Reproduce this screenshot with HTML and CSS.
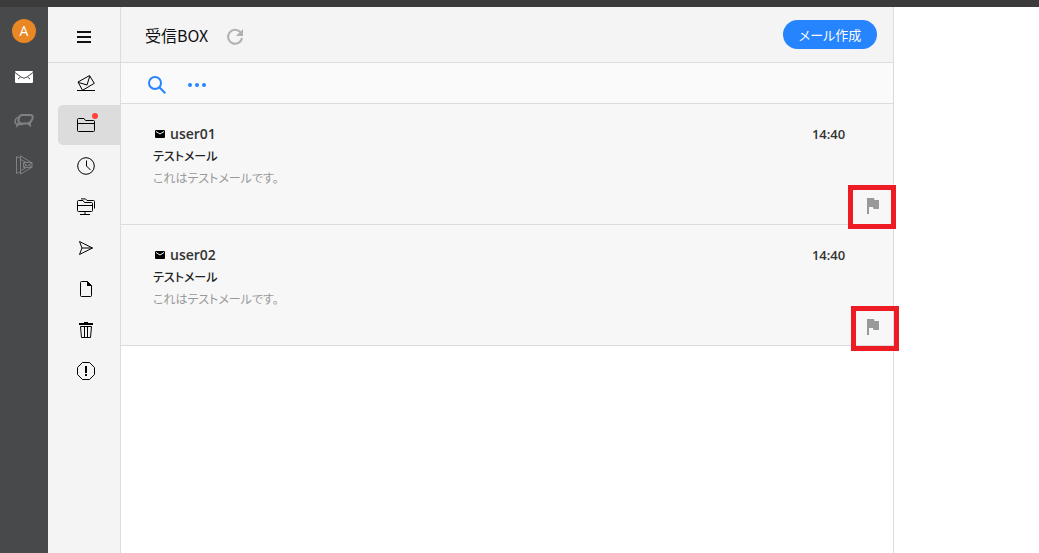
FILE: index.html
```html
<!DOCTYPE html>
<html lang="ja">
<head>
    <meta charset="UTF-8">
    <meta name="viewport" content="width=device-width, initial-scale=1.0">
    <title>受信BOX</title>
    <link rel="stylesheet" href="styles.css">
</head>
<body>
    <div class="topbar"></div>
    <div class="app">
        <nav class="rail" aria-label="アプリ">
            <button class="avatar">A</button>
            <a href="#" class="rail-link active" aria-label="メール">
                <svg width="18" height="12" viewBox="0 0 18 12">
                    <rect width="18" height="12" rx="1" fill="currentColor"/>
                    <path d="M0 1.500L6 6Q9 8.500 12 6L18 1.500M3 8L5.500 6M15 8L12.500 6" fill="none" stroke="#48494b"/>
                </svg>
            </a>
            <a href="#" class="rail-link" aria-label="チャット">
                <svg width="20" height="16" viewBox="0 0 20 16" fill="none" stroke="currentColor" stroke-width="2">
                    <path d="M7.500 2H16Q19.500 2 18.500 5.500Q17.500 9 14 10.500H7Q4 10 4.500 6.500Q5 3 7.500 2Z"/>
                    <path d="M4 4Q1 6 1 8.500Q1 11 4 11.500H9" stroke-width="1.500"/>
                    <path d="M2 10.500H6L2.500 15ZM13 10.500L17 8V14.500Z" fill="currentColor" stroke="none"/>
                </svg>
            </a>
            <a href="#" class="rail-link" aria-label="ビデオ">
                <svg width="18" height="20" viewBox="0 0 18 20" fill="none" stroke="currentColor">
                    <path d="M5 17L1.500 18.500V1.500L5 3"/>
                    <path d="M5.500 .8L17 8M5.500 .8V19.200L17 12M6 4.500L12 8M6 15.500L12 12"/>
                    <path d="M8.500 7.500H17V12.500H8.500ZM8.500 8L12.500 11L17 8M9 12L11 10M17 12L14 10"/>
                </svg>
            </a>
        </nav>

        <nav class="folders" aria-label="フォルダー">
            <div class="folders-head">
                <button class="icon-btn" aria-label="メニュー">
                    <svg width="14" height="12" viewBox="0 0 14 12" fill="currentColor">
                        <path d="M0 0H14V2H0ZM0 5H14V7H0ZM0 10H14V12H0Z"/>
                    </svg>
                </button>
            </div>
            <ul class="folder-list">
                <li><a href="#" class="folder" aria-label="全メール">
                    <svg width="18" height="18" viewBox="0 0 18 18">
                        <path d="M1 7L12.500 .6L17.300 8.300L5.500 15.300ZM1 7.300L10 10L12.800 1"/>
                        <path d="M0 15.500H18"/>
                    </svg>
                </a></li>
                <li><a href="#" class="folder selected" aria-label="受信BOX">
                    <svg width="18" height="18" viewBox="0 0 18 18">
                        <path d="M.5 14.500V3.500Q.5 2.500 1.500 2.500H7L8.500 4.500H16.500Q17.500 4.500 17.500 5.500V14.500Q17.500 15.500 16.500 15.500H1.500Q.5 15.500 .5 14.500ZM.5 7.500H17.500"/>
                    </svg>
                    <span class="dot"></span>
                </a></li>
                <li><a href="#" class="folder" aria-label="履歴">
                    <svg width="18" height="18" viewBox="0 0 18 18">
                        <circle cx="9" cy="9" r="8.300"/>
                        <path d="M9.500 3.500V9L13.500 13"/>
                    </svg>
                </a></li>
                <li><a href="#" class="folder" aria-label="共有フォルダー">
                    <svg width="18" height="18" viewBox="0 0 18 18">
                        <path d="M.5 12.500V3.500Q.5 2.500 1.500 2.500H6L7.500 4.500H14.500Q15.500 4.500 15.500 5.500V12.500Q15.500 13.500 14.500 13.500H1.500Q.5 13.500 .5 12.500ZM.5 7.500H15.500"/>
                        <path d="M4 .9H8.500L10 2.500H16.500Q17.500 2.500 17.500 3.500V10.500M8 13.500V16.500M3 16.500H13"/>
                    </svg>
                </a></li>
                <li><a href="#" class="folder" aria-label="送信済み">
                    <svg width="18" height="18" viewBox="0 0 18 18">
                        <path d="M2.500 2.500L15.500 9L2.500 15.500L5 9ZM5 9H15.500"/>
                    </svg>
                </a></li>
                <li><a href="#" class="folder" aria-label="下書き">
                    <svg width="18" height="18" viewBox="0 0 18 18">
                        <path d="M3.500 2.500Q3.500 1.500 4.500 1.500H10.500L14.500 5.500V15.500Q14.500 16.500 13.500 16.500H4.500Q3.500 16.500 3.500 15.500Z"/>
                        <path class="solid" d="M10 1L15 6H10Z"/>
                    </svg>
                </a></li>
                <li><a href="#" class="folder" aria-label="ゴミ箱">
                    <svg width="18" height="18" viewBox="0 0 18 18">
                        <path class="solid" d="M2 2H7V1H11V2H16V4H2Z"/>
                        <path d="M3.500 5.500H14.500L13.500 16.500H4.500ZM7.500 6V16M10.500 6V16"/>
                    </svg>
                </a></li>
                <li><a href="#" class="folder" aria-label="迷惑メール">
                    <svg width="18" height="18" viewBox="0 0 18 18">
                        <path d="M5.500 .5H12.500L17.500 5.500V12.500L12.500 17.500H5.500L.5 12.500V5.500Z"/>
                        <path class="solid" d="M8 4H10V11H8ZM8 12H10V14H8Z"/>
                    </svg>
                </a></li>
            </ul>
        </nav>

        <main class="mailbox">
            <header class="mailbox-head">
                <h1>受信BOX</h1>
                <button class="icon-btn reload" aria-label="更新">
                    <svg width="18" height="18" viewBox="0 0 18 18">
                        <path d="M14.200 4A7 7 0 1 0 16 10" fill="none" stroke="currentColor" stroke-width="2"/>
                        <path d="M17 1V8H10Z" fill="currentColor"/>
                    </svg>
                </button>
                <button class="compose">メール作成</button>
            </header>
            <div class="toolbar">
                <button class="icon-btn" aria-label="検索">
                    <svg width="18" height="18" viewBox="0 0 18 18" fill="none" stroke="currentColor" stroke-width="2">
                        <circle cx="7" cy="7" r="6"/>
                        <path d="M11.500 11.500L17.300 17.300"/>
                    </svg>
                </button>
                <button class="icon-btn" aria-label="その他">
                    <svg width="18" height="4" viewBox="0 0 18 4" fill="currentColor">
                        <circle cx="2" cy="2" r="2"/>
                        <circle cx="9" cy="2" r="2"/>
                        <circle cx="16" cy="2" r="2"/>
                    </svg>
                </button>
            </div>

            <article class="mail">
                <div class="mail-row">
                    <svg class="mail-icon" width="10" height="8" viewBox="0 0 10 8">
                        <rect width="10" height="8" rx="1"/>
                        <path d="M1 1.500L5 4L9 1.500" fill="none" stroke="#f7f7f7"/>
                    </svg>
                    <span class="sender">user01</span>
                    <time>14:40</time>
                </div>
                <div class="subject">テストメール</div>
                <div class="preview">これはテストメールです。</div>
                <button class="icon-btn flag" aria-label="フラグ">
                    <svg width="12" height="16" viewBox="0 0 12 16" fill="currentColor">
                        <path d="M0 0H7L7.500 2H12V11H6.500L6 9H2V16H0Z"/>
                    </svg>
                </button>
                <span class="marker"></span>
            </article>

            <article class="mail">
                <div class="mail-row">
                    <svg class="mail-icon" width="10" height="8" viewBox="0 0 10 8">
                        <rect width="10" height="8" rx="1"/>
                        <path d="M1 1.500L5 4L9 1.500" fill="none" stroke="#f7f7f7"/>
                    </svg>
                    <span class="sender">user02</span>
                    <time>14:40</time>
                </div>
                <div class="subject">テストメール</div>
                <div class="preview">これはテストメールです。</div>
                <button class="icon-btn flag" aria-label="フラグ">
                    <svg width="12" height="16" viewBox="0 0 12 16" fill="currentColor">
                        <path d="M0 0H7L7.500 2H12V11H6.500L6 9H2V16H0Z"/>
                    </svg>
                </button>
                <span class="marker marker-last"></span>
            </article>
        </main>
        <section class="reader" aria-label="本文"></section>
    </div>
</body>
</html>
```
FILE: styles.css
```css
* {
    box-sizing: border-box;
}

body {
    margin: 0;
    min-height: 100vh;
    display: flex;
    flex-direction: column;
    background: #fff;
    color: #111;
    font-family: "Open Sans", "Noto Sans CJK JP", sans-serif;
    font-size: 14px;
    line-height: 22px;
    font-feature-settings: "palt";
}

button {
    border: none;
    padding: 0;
    background: none;
    color: inherit;
    font: inherit;
    font-feature-settings: inherit;
    cursor: pointer;
}

svg {
    display: block;
}

.topbar {
    height: 7px;
    background: #3b3b3b;
}

.app {
    flex: 1;
    display: flex;
}

.rail {
    flex: 0 0 48px;
    display: flex;
    flex-direction: column;
    align-items: center;
    padding-top: 12px;
    background: #48494b;
}

.avatar {
    width: 24px;
    height: 24px;
    margin-bottom: 12px;
    border-radius: 50%;
    background: #e98724;
    color: #fff;
    line-height: 24px;
}

.rail-link {
    width: 48px;
    height: 44px;
    display: flex;
    align-items: center;
    justify-content: center;
    color: #808183;
}

.rail-link.active {
    color: #fff;
}

.folders {
    flex: 0 0 73px;
    background: #f4f4f4;
    border-right: 1px solid #dcdcdc;
}

.folders-head {
    height: 56px;
    display: flex;
    align-items: center;
    justify-content: center;
    padding: 4px 0 0;
    border-bottom: 1px solid #dcdcdc;
}

.folder-list {
    list-style: none;
    margin: 0;
    padding: 1px 0 0 10px;
    display: flex;
    flex-direction: column;
    gap: 1px;
}

.folder {
    position: relative;
    height: 40px;
    display: flex;
    align-items: center;
    padding-left: 19px;
    border-radius: 5px 0 0 5px;
}

.folder.selected {
    background: #dcdcdc;
}

.folder svg {
    fill: none;
    stroke: #000;
}

.folder .solid {
    fill: #000;
    stroke: none;
}

.dot {
    position: absolute;
    top: 8px;
    left: 34px;
    width: 6px;
    height: 6px;
    border-radius: 50%;
    background: #ff4136;
}

.mailbox {
    flex: 16 1 0;
    min-width: 0;
    border-right: 1px solid #dcdcdc;
}

.reader {
    flex: 3 1 0;
}

.mailbox-head {
    height: 56px;
    display: flex;
    align-items: center;
    padding: 0 16px 0 24px;
    background: #f4f4f4;
    border-bottom: 1px solid #dcdcdc;
}

.mailbox-head h1 {
    margin: 0;
    font-family: "Noto Sans CJK JP", sans-serif;
    font-size: 16px;
    font-weight: 400;
}

.reload {
    margin-left: 18px;
    padding-top: 4px;
    color: #b0b0b0;
}

.compose {
    margin-left: auto;
    height: 29px;
    padding: 0 16px;
    border-radius: 15px;
    background: #2684ff;
    color: #fff;
    font-size: 13px;
}

.toolbar {
    height: 41px;
    display: flex;
    align-items: center;
    gap: 22px;
    padding: 3px 27px 0;
    background: #fafafa;
    border-bottom: 1px solid #dcdcdc;
    color: #2684ff;
}

.mail {
    position: relative;
    min-height: 121px;
    padding: 18px 48px 0 32px;
    background: #f7f7f7;
    border-bottom: 1px solid #dcdcdc;
}

.mail-row {
    display: flex;
    align-items: center;
    color: #333;
    font-weight: 600;
    line-height: 24px;
}

.mail-icon {
    margin: 0 5px 0 2px;
    fill: #000;
}

.mail-row time {
    margin-left: auto;
    font-size: 13px;
}

.subject {
    color: #222;
    font-size: 12px;
    font-weight: 500;
}

.preview {
    color: #999;
    font-size: 12px;
}

.flag {
    position: absolute;
    right: 14px;
    bottom: 10px;
    color: #999;
}

/* Highlight frame around the flag button */
.marker {
    position: absolute;
    top: 81px;
    right: -3px;
    width: 48px;
    height: 44px;
    border: 5px solid #ed1c24;
    pointer-events: none;
    z-index: 1;
}

.marker-last {
    right: -6px;
    height: 45px;
}
```
